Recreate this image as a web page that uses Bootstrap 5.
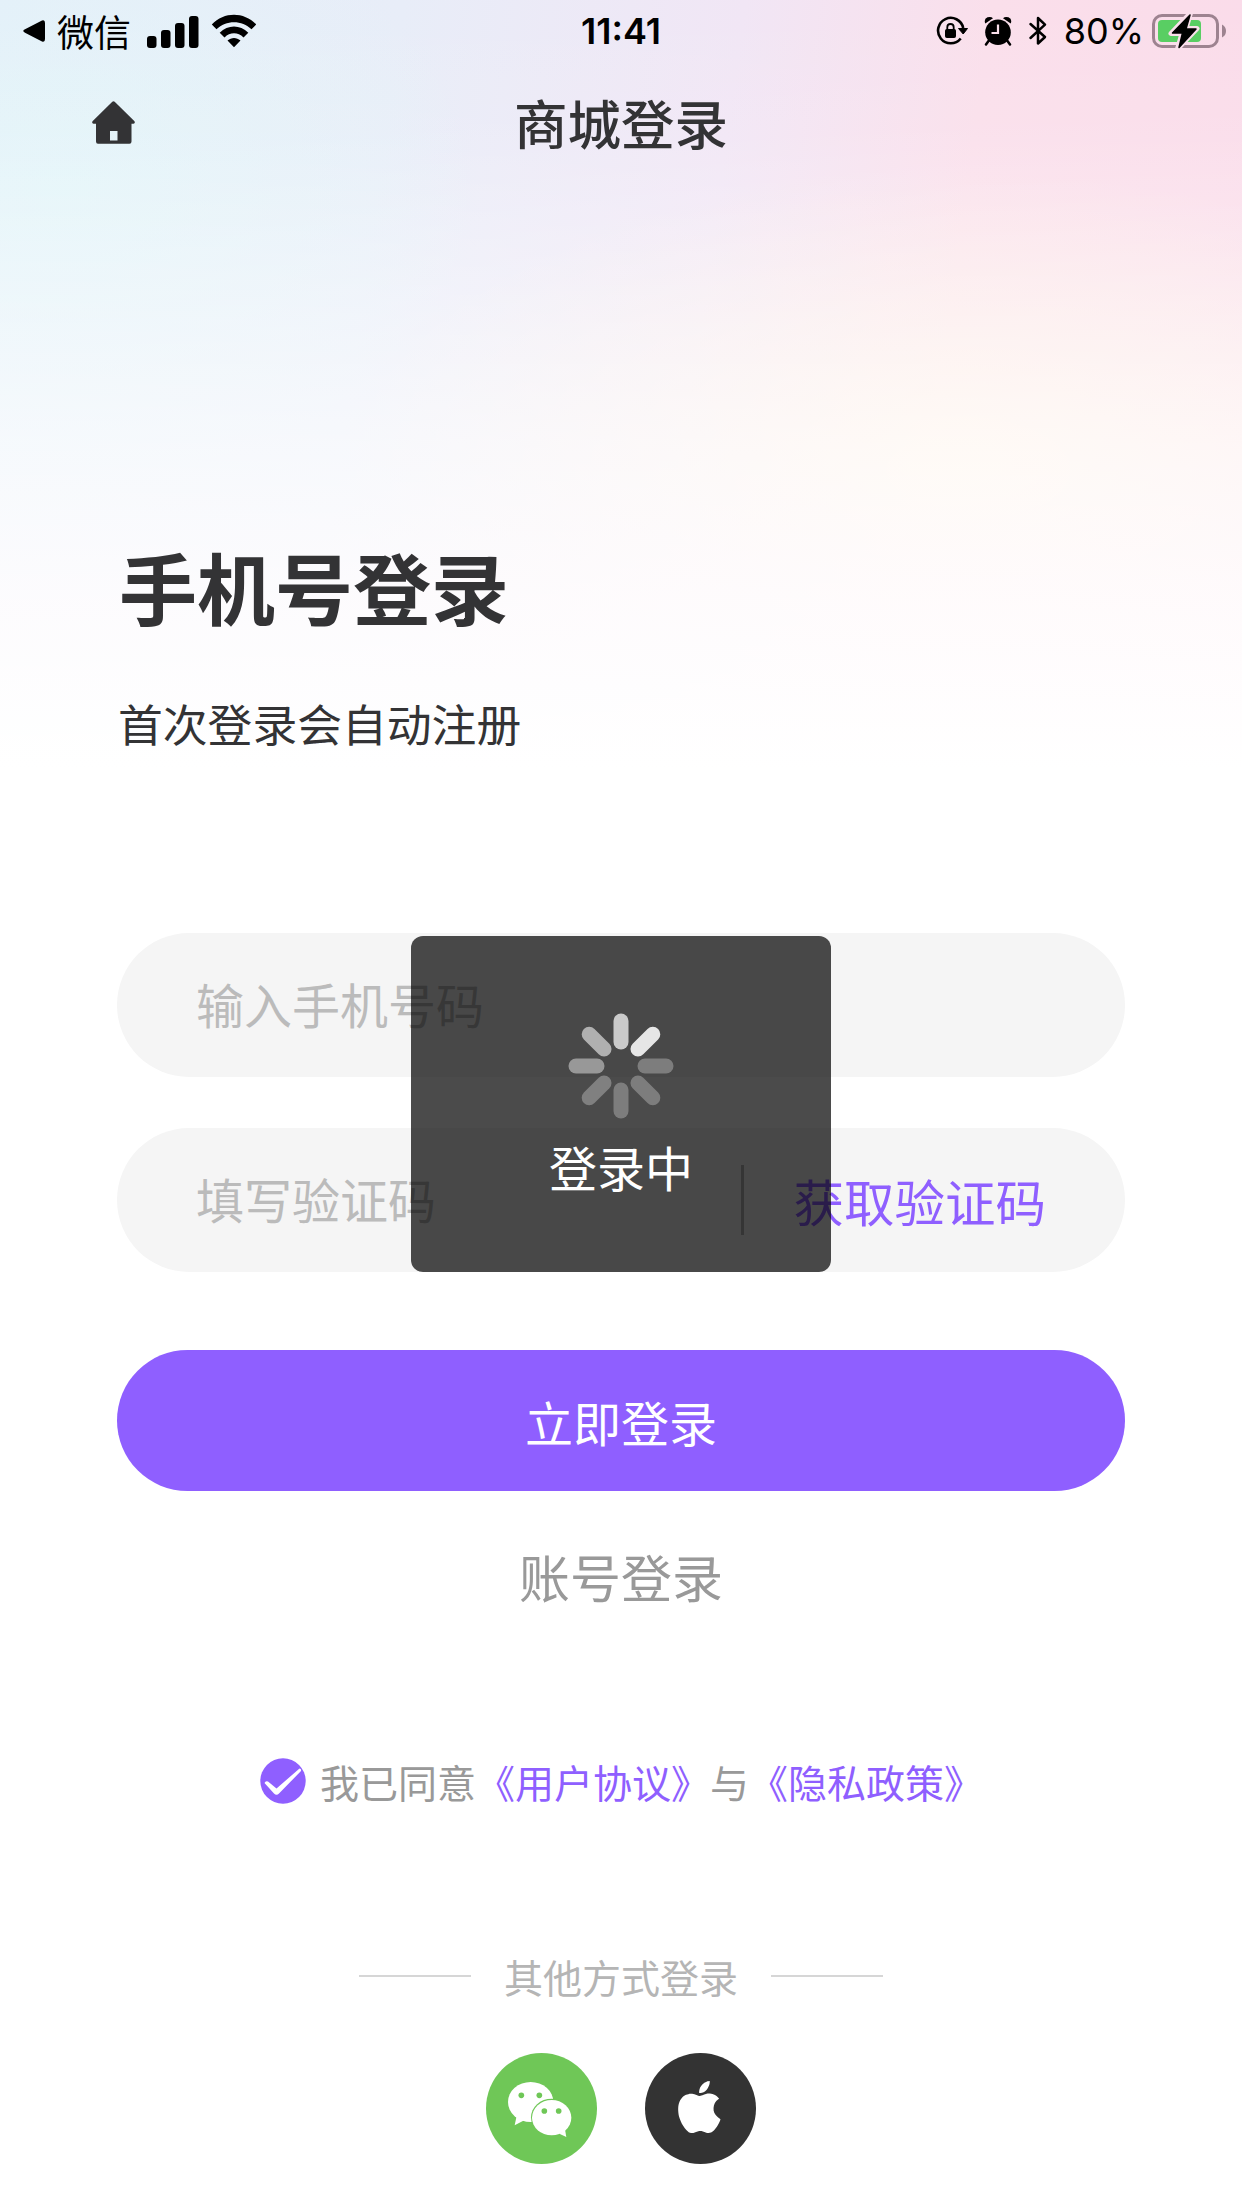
<!DOCTYPE html>
<html lang="zh-CN">
<head>
<meta charset="utf-8">
<meta name="viewport" content="width=device-width, initial-scale=1">
<title>商城登录</title>
<link href="https://cdn.jsdelivr.net/npm/bootstrap@5.3.0/dist/css/bootstrap.min.css" rel="stylesheet">
<style>
  :root { --brand: #8f5fff; --ink: #333335; }
  body { font-family: "Noto Sans CJK SC", sans-serif; color: var(--ink); background: #fff; }
  svg { display: block; flex: none; }
  .screen {
    width: 1242px; height: 2208px;
    background:
      linear-gradient(180deg, rgba(255,255,255,0) 0, rgba(255,255,255,.08) 130px, rgba(255,255,255,.42) 320px, rgba(255,255,255,.66) 450px, rgba(255,253,254,.9) 600px, #fff 770px),
      radial-gradient(ellipse 620px 300px at 960px 470px, rgba(255,245,228,.85), rgba(255,245,228,0)),
      radial-gradient(ellipse 420px 300px at 60px 190px, rgba(226,246,249,.8), rgba(226,246,249,0)),
      linear-gradient(98deg, #e5eff9 0, #e8edf8 26%, #f1e6f5 48%, #fadfeb 64%, #fad8e8 100%);
  }
  .status { height: 62px; padding: 0 16px 0 23px; color: #000; }
  .status-font { font-family: Inter, sans-serif; font-size: 36px; line-height: 62px; }
  .status-app { font-size: 37px; line-height: 62px; }
  .title-row { height: 120px; padding: 0 92px; }
  .title-row h1 { font-size: 53.5px; font-weight: 500; line-height: 80px; }
  .side { width: 43px; }
  .content { padding: 0 117px; }
  .headline { font-size: 78px; font-weight: 700; line-height: 110px; margin: 349px 0 0 2px; }
  .hint { font-size: 44.8px; line-height: 64px; margin: 50px 0 0 1px; }
  .field { height: 144px; border-radius: 72px; background: #f5f5f5; padding: 0 79px; }
  .field .form-control { font-size: 48px; line-height: 72px; }
  .field .form-control::placeholder { color: #bbb; opacity: 1; }
  .fields { margin-top: 178px; gap: 51px; }
  .split { width: 3px; height: 70px; background: #b4b4b4; margin-right: 50px; }
  .code-btn { font-size: 50.5px; line-height: 72px; color: var(--brand); }
  .submit { height: 141px; margin-top: 78px; font-size: 48px; background: var(--brand); color: #fff; }
  .account { font-size: 51px; line-height: 76px; color: #999; margin-top: 47px; }
  .agree { font-size: 39px; line-height: 58px; color: #999; margin-top: 138px; }
  .agree a { color: var(--brand); }
  .agree-row { padding-left: 143px; gap: 14px; }
  .other { font-size: 39px; line-height: 58px; color: #b5b5b5; margin-top: 137px; gap: 33px; }
  .rule { width: 112px; height: 2px; background: #d6d6d6; }
  .socials { margin-top: 48px; gap: 48px; }
  .toast-box { left: 411px; top: 936px; width: 420px; height: 336px; border-radius: 12px; background: rgba(0,0,0,.706); color: #fff; padding-top: 76px; font-size: 48px; line-height: 72px; }
  .toast-box span { margin-top: 10px; }
</style>
</head>
<body>
<div class="screen position-relative overflow-hidden">
  <header>
    <div class="status d-flex align-items-center position-relative">
      <svg width="22" height="22" viewBox="0 0 22 22"><path d="M2 9.3 19 .6Q22-.5 22 3V19Q22 22.500 19 21.400L2 12.700Q-1.500 11 2 9.300Z"/></svg>
      <span class="status-app ms-2 ps-1">微信</span>
      <svg class="ms-3" width="52" height="33" viewBox="0 0 52 33"><rect y="21" width="9.500" height="12" rx="3"/><rect x="14" y="15" width="9.500" height="18" rx="3"/><rect x="28" y="8" width="9.500" height="25" rx="3"/><rect x="42" y="1" width="9.500" height="32" rx="3"/></svg>
      <svg class="ms-2 ps-1" width="50" height="34" viewBox="0 0 46 34"><path d="M.8 10.500C13-2.500 33-2.500 45.200 10.500L40.500 15.200C31 5.800 15 5.800 5.500 15.200ZM8.700 18.700C17 10.300 29 10.300 37.300 18.700L32.500 23.400C27 18 19 18 13.500 23.400ZM16.500 26.500C20.500 23 25.500 23 29.500 26.500L23 33.300Z"/></svg>
      <span class="status-font fw-semibold position-absolute start-50 translate-middle-x">11:41</span>
      <div class="ms-auto d-flex align-items-center">
        <svg width="32" height="30" viewBox="0 0 32 30" fill="none" stroke="#000" stroke-width="2.600"><path d="M24.700 22.500A12.700 12.700 0 1 1 27.200 12"/><path d="M22.500 12.500H31.500L27.200 18Z" fill="#000" stroke-width="1"/><rect x="9.500" y="13.500" width="10" height="8" rx="1" fill="#000" stroke-width="1"/><path d="M11.300 14V11.200a3.200 3.200 0 0 1 6.400 0V14" stroke-width="1.800"/></svg>
        <svg class="ms-3" width="28" height="30" viewBox="0 0 28 30"><circle cx="14" cy="16.200" r="12.800"/><path d="M1.300 7.500Q-.5 3 3.500 1.300 7 .2 9 2.200ZM26.700 7.500Q28.500 3 24.500 1.300 21 .2 19 2.200Z"/><path d="M4.500 25 2 28.500M23.500 25 26 28.500" stroke="#000" stroke-width="2.500" stroke-linecap="round"/><path d="M14 8.500V17H7.500" fill="none" stroke="#fadfeb" stroke-width="2.200"/></svg>
        <svg class="ms-3" width="20" height="30" viewBox="0 0 20 30" fill="none" stroke="#000" stroke-width="2.500" stroke-linejoin="round" stroke-linecap="round"><path d="M2.500 8 17 21 10 27.500V2L17 8.700 2.500 22"/></svg>
        <span class="status-font ms-3">80%</span>
        <svg class="ms-2" width="74" height="38" viewBox="0 0 74 38"><rect x="1.500" y="3.500" width="64" height="31" rx="8.500" fill="none" stroke="#9d8390" stroke-width="3"/><path d="M70 12.500Q74 14.500 74 19T70 25.500Z" fill="#9d8390"/><rect x="6" y="8" width="43" height="22" rx="4" fill="#59ce63"/><path d="M38.500 1 19 21.500H30L25.500 37 45 16.500H34Z" stroke="#fadfeb" stroke-width="5" stroke-linejoin="round"/><path d="M38 3 20.500 21H30.500L27 35.500 44 17H34Z" stroke="#000" stroke-width="1.500" stroke-linejoin="round"/></svg>
      </div>
    </div>
    <div class="title-row d-flex align-items-center justify-content-between">
      <svg class="side" width="43" height="43" viewBox="0 0 43 43" fill="#333335"><path fill-rule="evenodd" d="M20.300.8Q21.500-.4 22.700.8L42.500 20.300Q43.500 22.500 41.500 22.800H39.500V40.500Q39.500 42.700 37.500 42.700H6Q4 42.700 4 40.500V22.800H1.500Q-.5 22.500.5 20.300ZM18 30V39.500H25.500V30Z"/></svg>
      <h1 class="m-0">商城登录</h1>
      <div class="side"></div>
    </div>
  </header>

  <main class="content">
    <h2 class="headline">手机号登录</h2>
    <p class="hint mb-0">首次登录会自动注册</p>

    <form>
      <div class="fields d-flex flex-column">
        <div class="field d-flex align-items-center">
          <input class="form-control border-0 bg-transparent p-0 pb-1" type="tel" placeholder="输入手机号码" aria-label="手机号码">
        </div>
        <div class="field d-flex align-items-center">
          <input class="form-control border-0 bg-transparent p-0 pb-1 flex-fill" type="text" placeholder="填写验证码" aria-label="验证码">
          <div class="split flex-shrink-0"></div>
          <a class="code-btn text-decoration-none text-nowrap" href="#">获取验证码</a>
        </div>
      </div>
      <button class="submit btn w-100 rounded-pill border-0 p-0" type="button">立即登录</button>
      <div class="account text-center">账号登录</div>
    </form>

    <div class="agree agree-row d-flex align-items-center">
      <svg width="46" height="46" viewBox="0 0 46 46"><circle cx="23" cy="23" r="22.700" fill="#8f5fff"/><path d="M4.500 25Q5.500 22.500 8 23.500L16.500 30.500 39.500 10.500Q41.500 10.500 41 13L19 35.500Q16.500 38 14 35.500Z" fill="#fff"/></svg>
      <span class="text-nowrap">我已同意<a class="text-decoration-none" href="#">《用户协议》</a>与<a class="text-decoration-none" href="#">《隐私政策》</a></span>
    </div>

    <div class="other d-flex align-items-center justify-content-center">
      <div class="rule"></div><span>其他方式登录</span><div class="rule"></div>
    </div>
    <div class="socials d-flex justify-content-center">
      <svg width="111" height="111" viewBox="0 0 333 333"><circle cx="166.500" cy="166.500" r="166.500" fill="#6fc757"/><g fill="#fff"><ellipse cx="134" cy="147" rx="68" ry="60"/><path d="M92 188 86 217 112 203 130 200Z"/></g><ellipse cx="197" cy="193" rx="62" ry="56" fill="#6fc757"/><g fill="#fff"><ellipse cx="197" cy="194" rx="59" ry="53"/><path d="M220 242 241 252 237 230Z"/></g><g fill="#6fc757"><circle cx="106" cy="127" r="8.500"/><circle cx="160" cy="127" r="8.500"/><circle cx="175" cy="174" r="8.500"/><circle cx="218" cy="174" r="8.500"/></g></svg>
      <svg width="111" height="111" viewBox="0 0 111 111"><circle cx="55.500" cy="55.500" r="55.500" fill="#333"/><g transform="translate(28.300 28) scale(3.250)" fill="#fff"><path d="M11.182.008C11.148-.03 9.923.023 8.857 1.180c-1.066 1.156-.902 2.482-.878 2.516s1.520.087 2.475-1.258.762-2.391.728-2.430m3.314 11.733c-.048-.096-2.325-1.234-2.113-3.422s1.675-2.789 1.698-2.854-.597-.790-1.254-1.157a3.700 3.700 0 0 0-1.563-.434c-.108-.003-.483-.095-1.254.116-.508.139-1.653.589-1.968.607-.316.018-1.256-.522-2.267-.665-.647-.125-1.333.131-1.824.328-.490.196-1.422.754-2.074 2.237-.652 1.482-.311 3.830-.067 4.560s.625 1.924 1.273 2.796c.576.984 1.340 1.667 1.659 1.899s1.219.386 1.843.067c.502-.308 1.408-.485 1.766-.472.357.013 1.061.154 1.782.539.571.197 1.111.115 1.652-.105.541-.221 1.324-1.059 2.238-2.758q.520-1.185.473-1.282"/></g></svg>
    </div>
  </main>

  <div class="toast-box position-absolute d-flex flex-column align-items-center" role="status">
    <svg width="108" height="108" viewBox="-54 -54 108 108" stroke-width="15" stroke-linecap="round">
      <g stroke="#7d7d7d"><path d="M24 0H45"/><path d="M24 0H45" transform="rotate(45)"/><path d="M24 0H45" transform="rotate(90)"/><path d="M24 0H45" transform="rotate(135)" stroke="#808080"/></g>
      <path d="M24 0H45" transform="rotate(180)" stroke="#989898"/><path d="M24 0H45" transform="rotate(225)" stroke="#b0b0b0"/><path d="M24 0H45" transform="rotate(270)" stroke="#cacaca"/><path d="M24 0H45" transform="rotate(315)" stroke="#e6e6e6"/>
    </svg>
    <span>登录中</span>
  </div>
</div>
<script src="https://cdn.jsdelivr.net/npm/bootstrap@5.3.0/dist/js/bootstrap.bundle.min.js"></script>
</body>
</html>
